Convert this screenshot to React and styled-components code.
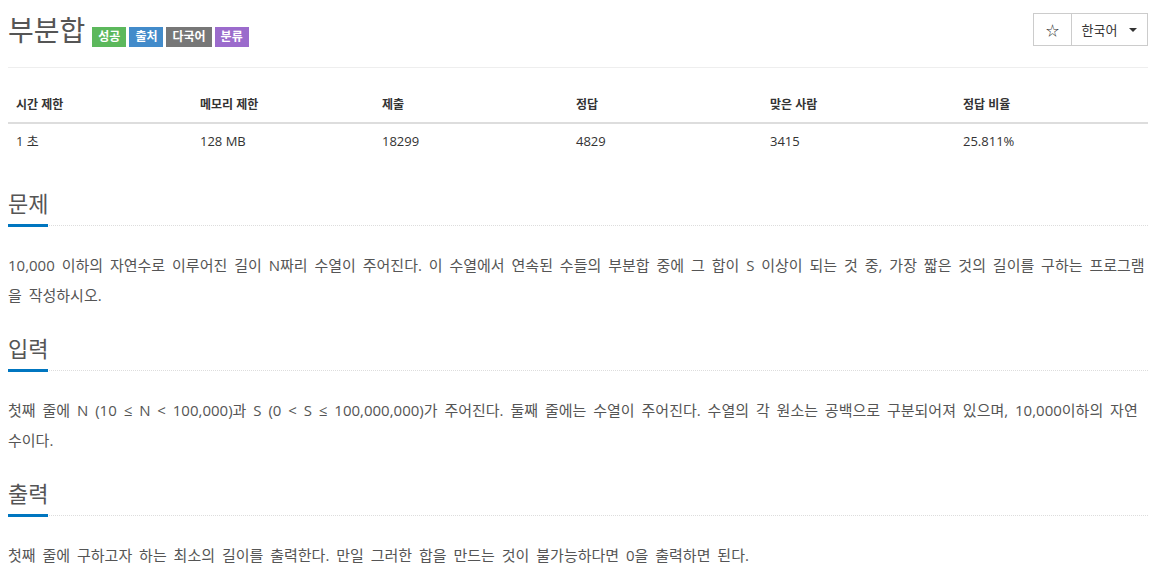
import React from 'react';
import styled, { createGlobalStyle } from 'styled-components';

const GlobalStyle = createGlobalStyle`
    html, body {
        margin: 0;
        padding: 0;
        background: #fff;
    }

    body {
        font-family: 'Open Sans', 'Noto Sans CJK KR', sans-serif;
        color: #555;
    }
`;

const Page = styled.main`
    width: 1140px;
    margin-left: 8px;
`;

const Header = styled.header`
    display: flex;
    align-items: flex-start;
    justify-content: space-between;
    padding-top: 13px;
    padding-bottom: 20px;
    border-bottom: 1px solid #eee;
`;

const TitleRow = styled.div`
    display: flex;
    align-items: baseline;
    gap: 3px;
`;

const Title = styled.h1`
    margin: 0 4px 0 0;
    font-size: 28px;
    line-height: 34px;
    font-weight: 400;
    color: #555;
`;

const Badge = styled.span`
    display: inline-block;
    padding: 4px 6px;
    font-size: 12px;
    line-height: 12px;
    font-weight: 700;
    color: #fff;
    background: ${({ $color }) => $color};
`;

const ButtonGroup = styled.div`
    display: flex;
    height: 33px;
`;

const Button = styled.button`
    display: flex;
    align-items: center;
    justify-content: center;
    gap: 12px;
    width: ${({ $wide }) => ($wide ? '76px' : '39px')};
    height: 33px;
    box-sizing: border-box;
    padding: 0;
    border: 1px solid #ccc;
    background: #fff;
    color: #333;
    font-family: 'Open Sans', 'Noto Sans CJK KR', sans-serif;
    font-size: 13px;

    & + & {
        border-left: 0;
    }
`;

const Caret = styled.span`
    width: 0;
    height: 0;
    border-left: 4px solid transparent;
    border-right: 4px solid transparent;
    border-top: 4px solid #333;
`;

const Table = styled.table`
    width: 100%;
    margin: 20px 0 0;
    border-collapse: collapse;
    table-layout: fixed;
    color: #333;
`;

const Th = styled.th`
    padding: 8px;
    text-align: left;
    font-size: 12px;
    line-height: 18px;
    font-weight: 700;
    border-bottom: 2px solid #ddd;
`;

const Td = styled.td`
    padding: 8px;
    font-size: 13px;
    line-height: 18px;
`;

const Section = styled.section`
    margin-top: ${({ $first }) => ($first ? '33px' : '26px')};
`;

const Headline = styled.h2`
    display: flex;
    margin: 0;
    font-size: 22px;
    line-height: 24px;
    font-weight: 400;
    color: #555;
    border-bottom: 1px dotted #ddd;
`;

const HeadlineText = styled.span`
    padding-bottom: 9px;
    margin-bottom: -2px;
    border-bottom: 3px solid #0076c0;
`;

const Text = styled.p`
    margin: 24px 0 0;
    font-size: 15px;
    line-height: 30px;
    word-spacing: 3px;
    color: #555;
`;

const badges = [
    { label: '성공', color: '#5cb85c' },
    { label: '출처', color: '#428bca' },
    { label: '다국어', color: '#777' },
    { label: '분류', color: '#9b6bcc' },
];

const columns = [
    { title: '시간 제한', value: '1 초', width: 184 },
    { title: '메모리 제한', value: '128 MB', width: 182 },
    { title: '제출', value: '18299', width: 194 },
    { title: '정답', value: '4829', width: 194 },
    { title: '맞은 사람', value: '3415', width: 193 },
    { title: '정답 비율', value: '25.811%', width: 193 },
];

const sections = [
    {
        title: '문제',
        text: '10,000 이하의 자연수로 이루어진 길이 N짜리 수열이 주어진다. 이 수열에서 연속된 수들의 부분합 중에 그 합이 S 이상이 되는 것 중, 가장 짧은 것의 길이를 구하는 프로그램을 작성하시오.',
    },
    {
        title: '입력',
        text: '첫째 줄에 N (10 ≤ N < 100,000)과 S (0 < S ≤ 100,000,000)가 주어진다. 둘째 줄에는 수열이 주어진다. 수열의 각 원소는 공백으로 구분되어져 있으며, 10,000이하의 자연수이다.',
    },
    {
        title: '출력',
        text: '첫째 줄에 구하고자 하는 최소의 길이를 출력한다. 만일 그러한 합을 만드는 것이 불가능하다면 0을 출력하면 된다.',
    },
];

export default function App() {
    return (
        <>
            <GlobalStyle />
            <Page>
                <Header>
                    <TitleRow>
                        <Title>부분합</Title>
                        {badges.map(({ label, color }) => (
                            <Badge key={label} $color={color}>
                                {label}
                            </Badge>
                        ))}
                    </TitleRow>

                    <ButtonGroup>
                        <Button>☆</Button>
                        <Button $wide>
                            한국어
                            <Caret />
                        </Button>
                    </ButtonGroup>
                </Header>

                <Table>
                    <colgroup>
                        {columns.map(({ title, width }) => (
                            <col key={title} style={{ width }} />
                        ))}
                    </colgroup>
                    <thead>
                        <tr>
                            {columns.map(({ title }) => (
                                <Th key={title}>{title}</Th>
                            ))}
                        </tr>
                    </thead>
                    <tbody>
                        <tr>
                            {columns.map(({ title, value }) => (
                                <Td key={title}>{value}</Td>
                            ))}
                        </tr>
                    </tbody>
                </Table>

                {sections.map(({ title, text }, i) => (
                    <Section key={title} $first={i === 0}>
                        <Headline>
                            <HeadlineText>{title}</HeadlineText>
                        </Headline>
                        <Text>{text}</Text>
                    </Section>
                ))}
            </Page>
        </>
    );
}
